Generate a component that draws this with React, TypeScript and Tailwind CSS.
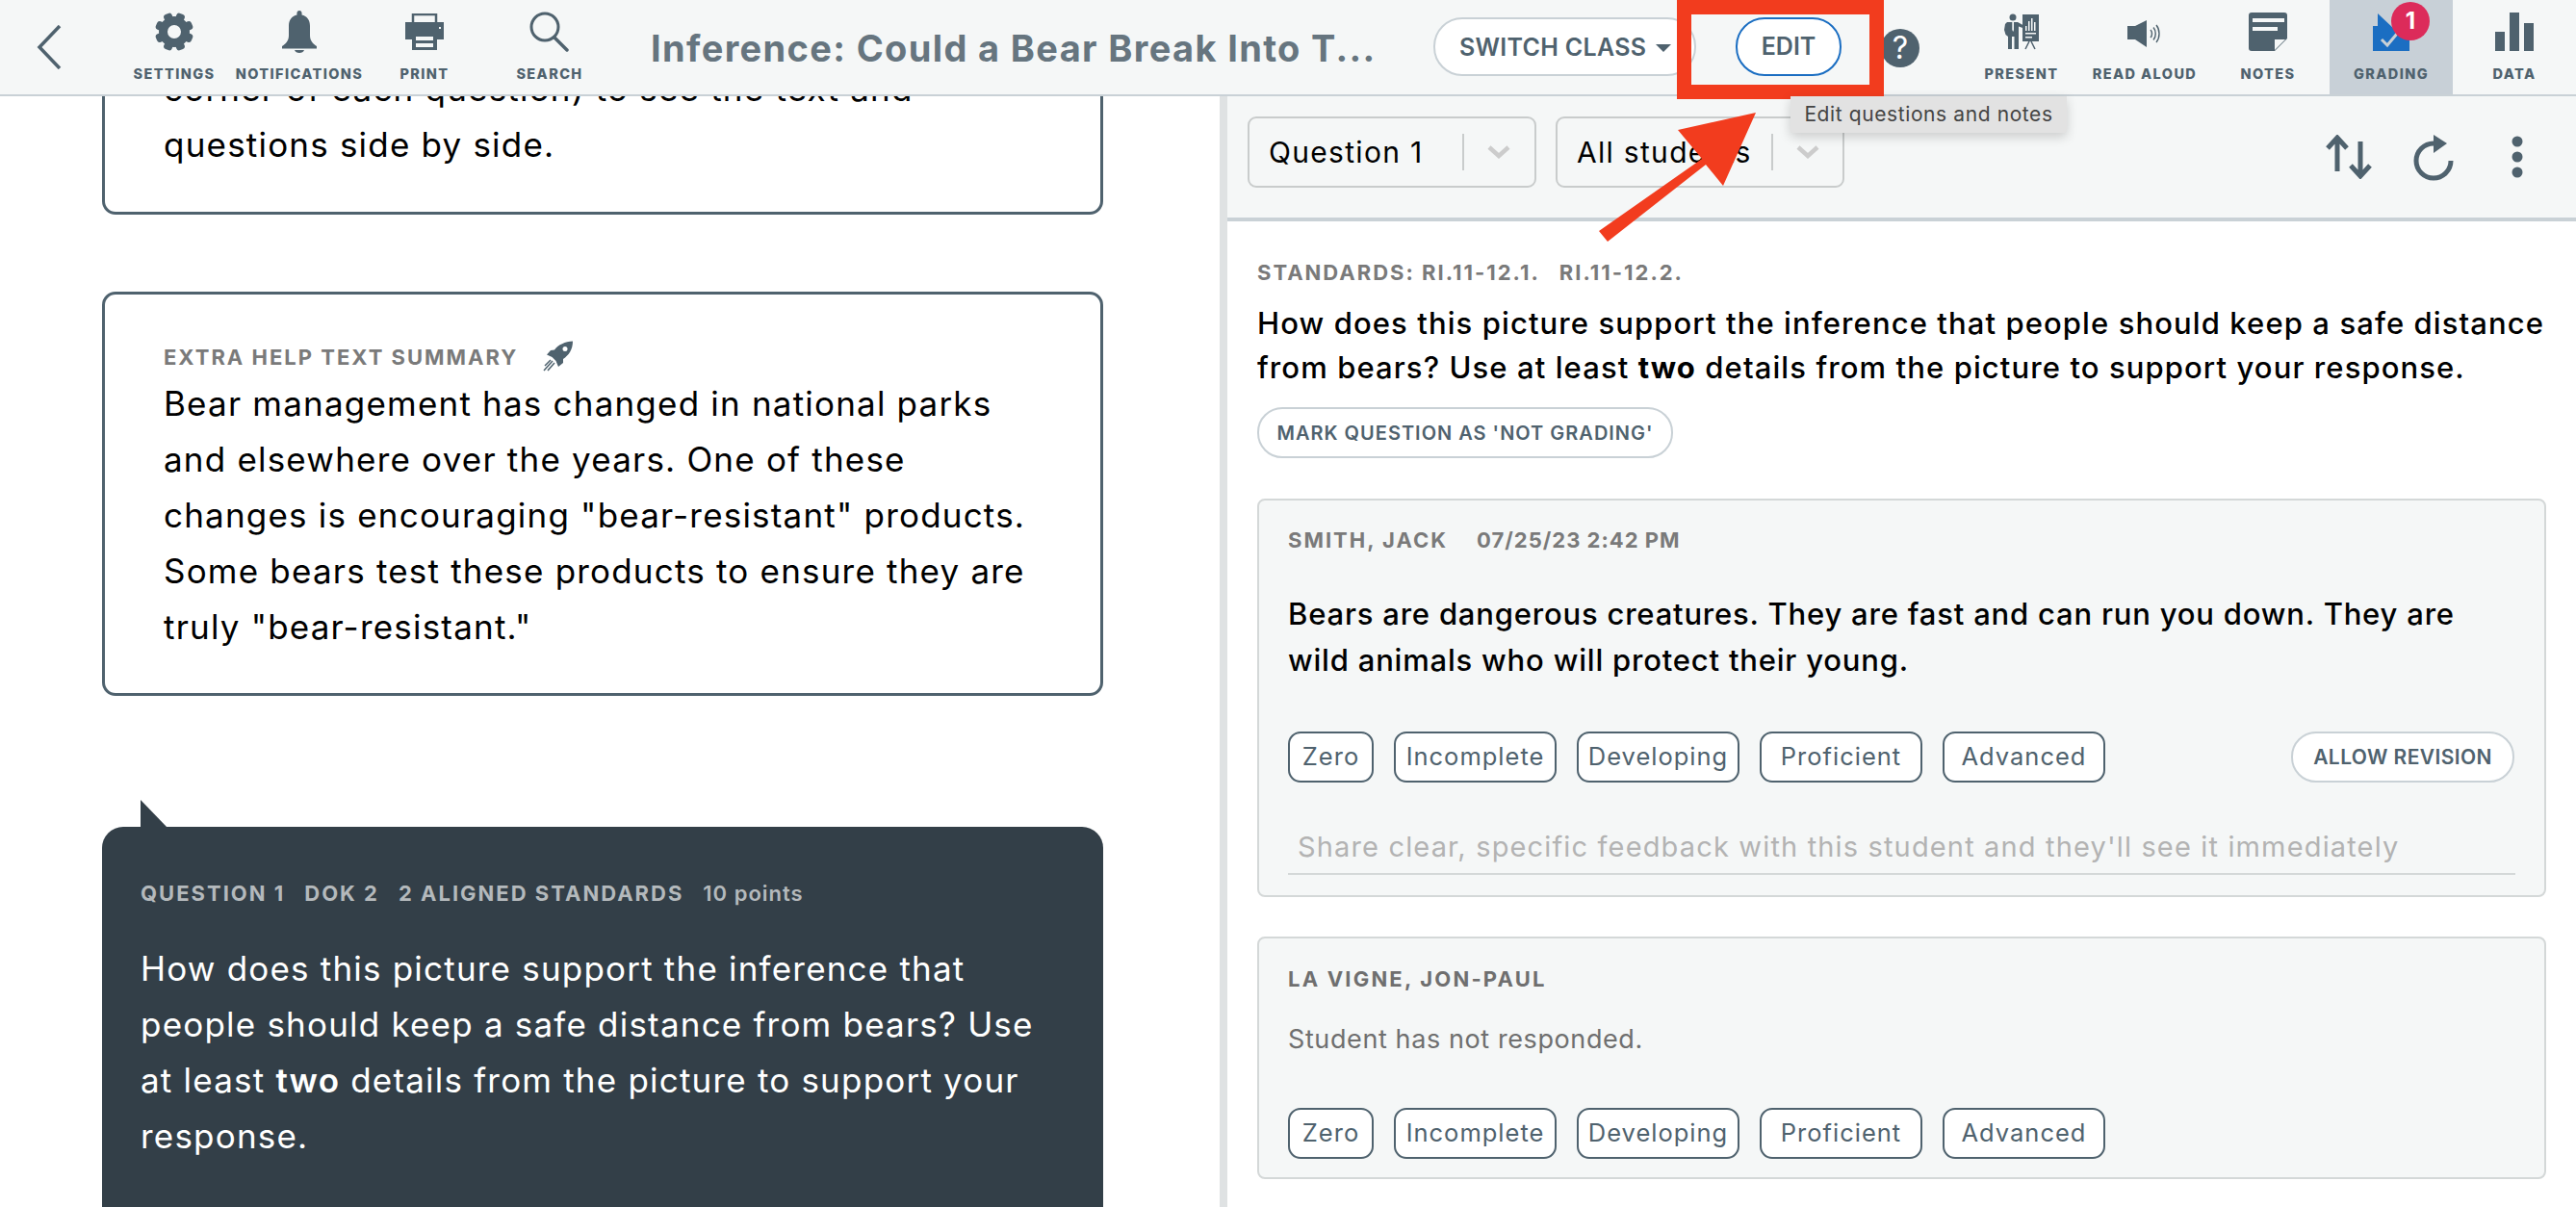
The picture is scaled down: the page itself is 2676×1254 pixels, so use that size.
import type { ReactNode } from "react";

const SLATE = "#4f626e";

function Gear() {
  return (
    <svg width="40" height="40" viewBox="0 0 40 40" fill={SLATE}>
      {[0, 45, 90, 135, 180, 225, 270, 315].map((a) => (
        <rect key={a} x="15.5" y="0" width="9" height="8" rx="3" transform={`rotate(${a + 22.5} 20 20)`} />
      ))}
      <circle cx="20" cy="20" r="11.5" fill="none" stroke={SLATE} strokeWidth="9" />
    </svg>
  );
}

function Bell() {
  return (
    <svg width="36" height="44" viewBox="0 0 36 44" fill={SLATE}>
      <path d="M18 0C16 0 15 2 15.5 4.5C10 5.5 7 10 7 16L7 26C7 32 3 35 0 37L0 39.5L36 39.5L36 37C33 35 29 32 29 26L29 16C29 10 26 5.500 20.500 4.500C21 2 20 0 18 0Z" />
      <path d="M13 41L23 41C22 45 14 45 13 41Z" />
    </svg>
  );
}

function Printer() {
  return (
    <svg width="40" height="38" viewBox="0 0 40 38">
      <rect x="8" y="1" width="24" height="11" fill="none" stroke={SLATE} strokeWidth="2.500" />
      <rect x="0" y="9" width="40" height="18" fill={SLATE} />
      <rect x="7" y="21" width="26" height="17" fill={SLATE} />
      <rect x="11" y="24" width="18" height="11" fill="#f5f7f7" />
      <rect x="11" y="28" width="18" height="3" fill={SLATE} />
      <rect x="35" y="14" width="2" height="2" fill="#f5f7f7" />
    </svg>
  );
}

function Search() {
  return (
    <svg width="42" height="42" viewBox="0 0 42 42" fill="none" stroke={SLATE} strokeWidth="3" strokeLinecap="round">
      <circle cx="16" cy="16" r="14" />
      <path d="M26 27L39 40" strokeWidth="3.500" />
    </svg>
  );
}

function Present() {
  return (
    <svg width="36" height="38" viewBox="0 0 36 38" fill={SLATE}>
      <circle cx="9" cy="4" r="3.500" />
      <path d="M3 9L14 9L23 14L22 16L15 13.500L15 37L10.500 37L10.500 24L8 24L8 37L4 37L4 24L1.500 22L0 17L1 11Z" />
      <path d="M8.300 9L10 9L10 17L9.200 19L8.300 17Z" fill="#f5f7f7" />
      <rect x="19" y="1" width="17" height="28" />
      <path d="M22 13h1.500v5H22zM25 8h1.500v10H25zM28 5h1.500v13H28zM31 9h1.500v9H31z" fill="#f5f7f7" />
      <rect x="22" y="20" width="11" height="1.500" fill="#f5f7f7" />
      <rect x="22" y="24" width="7" height="1.500" fill="#f5f7f7" />
      <path d="M26 29L22 37M28 29L32 37" stroke={SLATE} strokeWidth="1.500" fill="none" />
    </svg>
  );
}

function Speaker() {
  return (
    <svg width="36" height="34" viewBox="0 0 36 34" fill="none" stroke={SLATE} strokeWidth="1.400">
      <path d="M0 11L8 11L20 5L20 33L8 25L0 25Z" fill={SLATE} stroke="none" />
      <path d="M24 15C26 17 26 21 24 23" />
      <path d="M27 12.500C30 16 30 22 27 25.500" />
      <path d="M30 10C34 15 34 23 30 28" />
    </svg>
  );
}

function Notes() {
  return (
    <svg width="40" height="40" viewBox="0 0 40 40">
      <path d="M3 0L37 0C39 0 40 1 40 3L40 27L27 40L3 40C1 40 0 39 0 37L0 3C0 1 1 0 3 0Z" fill={SLATE} />
      <rect x="4" y="6" width="33" height="4" fill="#f5f7f7" />
      <rect x="4" y="15" width="26" height="4" fill="#f5f7f7" />
      <path d="M38 28L27 28L27 39Z" fill="#f5f7f7" />
    </svg>
  );
}

function Grading() {
  return (
    <svg width="38" height="39" viewBox="0 0 38 39">
      <path d="M0 13L5 13L5 0L22 16L38 16L38 39L0 39Z" fill="#1b6ec2" />
      <path d="M9 27L15 33L25 21" fill="none" stroke="#c9d1d6" strokeWidth="3" />
    </svg>
  );
}

function Bars() {
  return (
    <svg width="40" height="40" viewBox="0 0 40 40" fill={SLATE}>
      <rect x="0" y="20" width="10" height="20" />
      <rect x="15" y="0" width="10" height="40" />
      <rect x="30" y="11" width="10" height="29" />
    </svg>
  );
}

function Rocket() {
  return (
    <svg width="36" height="36" viewBox="0 0 36 36" fill={SLATE}>
      <path d="M33 1.500C33 10 29 16 23 20L23 24L18 28L15.500 22L11.500 18L6 15.500L10 11L14 10.500C18 5 25 2 33 1.500Z" />
      <path d="M12 22L3 32M14 24L7 32M10 21L4 27" stroke={SLATE} strokeWidth="1.500" fill="none" />
      <circle cx="25" cy="9.500" r="2.500" fill="#ffffff" />
    </svg>
  );
}

function Swap() {
  return (
    <svg width="50" height="46" viewBox="0 0 50 46" fill="none" stroke={SLATE} strokeWidth="5">
      <path d="M13 38L13 3M3 14L13 3L23 14" />
      <path d="M37 7L37 43M27 32L37 43L47 32" />
    </svg>
  );
}

function Refresh() {
  return (
    <svg width="46" height="54" viewBox="0 0 46 54" fill="none">
      <path d="M23 13A18 18 0 1 0 41 31" stroke={SLATE} strokeWidth="5" />
      <path d="M37 13L23 4L23 23Z" fill={SLATE} />
    </svg>
  );
}

function Chevron() {
  return (
    <svg width="24" height="14" viewBox="0 0 24 14" fill="none" stroke="#cccccc" strokeWidth="4.500">
      <path d="M2 2L12 11L22 2" />
    </svg>
  );
}

function ToolItem({ icon, label, active, w }: { icon: ReactNode; label: string; active?: boolean; w: string }) {
  return (
    <div className={`relative flex h-[98px] ${w} shrink-0 flex-col items-center ${active ? "bg-[#c8d0d7]" : ""}`}>
      <div className="flex h-[66px] items-center justify-center">{icon}</div>
      <span className="text-[14.5px] leading-[22px] font-extrabold tracking-[1.4px] whitespace-nowrap text-[#4f626e]">{label}</span>
    </div>
  );
}

function Select({ label, w, dividerMl }: { label: string; w: string; dividerMl: string }) {
  return (
    <div className={`flex h-[74px] ${w} items-center rounded-[9px] border-2 border-[#c9cccc] pl-[20px]`}>
      <span className="text-[30px] tracking-[1.3px] whitespace-nowrap text-black">{label}</span>
      <span className={`h-[38px] w-[2px] bg-[#c9cccc] ${dividerMl}`} />
      <span className="ml-[24px]">
        <Chevron />
      </span>
    </div>
  );
}

const CHIPS = [
  { label: "Zero", w: "w-[89px]" },
  { label: "Incomplete", w: "w-[169px]" },
  { label: "Developing", w: "w-[169px]" },
  { label: "Proficient", w: "w-[169px]" },
  { label: "Advanced", w: "w-[169px]" },
];

function Chips() {
  return (
    <div className="flex gap-[21px]">
      {CHIPS.map((c) => (
        <div
          key={c.label}
          className={`flex h-[53px] ${c.w} items-center justify-center rounded-[13px] border-2 border-[#4f626e] bg-white text-[25.5px] tracking-[1px] text-[#4f626e]`}
        >
          {c.label}
        </div>
      ))}
    </div>
  );
}

export default function App() {
  return (
    <div className="relative flex h-[1254px] w-[2676px] flex-col overflow-hidden bg-white font-['Inter',sans-serif]">
      {/* top bar */}
      <header className="z-10 flex h-[100px] shrink-0 items-start border-b-2 border-[#c9d1d6] bg-[#f5f7f7]">
        <div className="flex h-[98px] w-[116px] shrink-0 items-center pl-[38px]">
          <svg width="26" height="46" viewBox="0 0 26 46" fill="none" stroke={SLATE} strokeWidth="3.500">
            <path d="M24 1L3 23L24 45" />
          </svg>
        </div>
        <ToolItem w="w-[130px]" icon={<Gear />} label="SETTINGS" />
        <ToolItem w="w-[130px]" icon={<Bell />} label="NOTIFICATIONS" />
        <ToolItem w="w-[130px]" icon={<Printer />} label="PRINT" />
        <ToolItem w="w-[130px]" icon={<Search />} label="SEARCH" />
        <h1 className="ml-[40px] w-[813px] shrink-0 pt-[26px] text-[38px] leading-[48px] font-bold tracking-[1.35px] whitespace-nowrap text-[#66757f]">
          Inference: Could a Bear Break Into T...
        </h1>
        <div className="mt-[18px] flex h-[61px] w-[273px] shrink-0 items-center rounded-[30px] border-2 border-[#c9d1d6] bg-white pt-[2px] pl-[25px] text-[25px] font-semibold tracking-[0.3px] whitespace-nowrap text-[#4f626e]">
          SWITCH CLASS
          <span className="ml-[10px] h-0 w-0 border-x-[8px] border-t-[8px] border-x-transparent border-t-[#4f626e]" />
        </div>
        <div className="mt-[18px] ml-[41px] flex h-[61px] w-[110px] shrink-0 items-center justify-center rounded-[30px] border-2 border-[#1b6ec2] bg-white text-[25px] font-semibold text-[#4f626e]">
          EDIT
        </div>
        <div className="mt-[30px] ml-[41px] flex h-[40px] w-[40px] shrink-0 items-center justify-center rounded-full bg-[#4f626e] text-[32px] leading-none text-white">
          ?
        </div>
        <div className="ml-auto flex">
          <ToolItem w="w-[128px]" icon={<Present />} label="PRESENT" />
          <ToolItem w="w-[128px]" icon={<Speaker />} label="READ ALOUD" />
          <ToolItem w="w-[128px]" icon={<Notes />} label="NOTES" />
          <div className="relative">
            <ToolItem w="w-[128px]" active icon={<Grading />} label="GRADING" />
            <span className="absolute top-[2px] left-[64px] flex h-[40px] w-[40px] items-center justify-center rounded-full bg-[#dc2b5a] text-[24px] font-bold text-white">
              1
            </span>
          </div>
          <ToolItem w="w-[128px]" icon={<Bars />} label="DATA" />
        </div>
      </header>

      <div className="flex min-h-0 flex-1">
        {/* passage column */}
        <main className="w-[1267px] shrink-0 overflow-hidden pr-[121px] pl-[106px] text-[35px] leading-[58px] tracking-[1.2px] whitespace-nowrap text-black">
          <section className="-mt-[60px] rounded-[14px] border-[3px] border-[#4f626e] pt-[20px] pr-[40px] pb-[41px] pl-[61px]">
            <p>corner of each question) to see the text and</p>
            <p>questions side by side.</p>
          </section>
          <section className="mt-[80px] rounded-[14px] border-[3px] border-[#4f626e] pt-[45px] pr-[30px] pb-[40px] pl-[61px]">
            <div className="flex h-[39px] items-center gap-[24px] text-[22px] leading-none font-bold tracking-[2px] text-[#7a7a7a]">
              EXTRA HELP TEXT SUMMARY
              <Rocket />
            </div>
            <p>Bear management has changed in national parks</p>
            <p>and elsewhere over the years. One of these</p>
            <p>changes is encouraging "bear-resistant" products.</p>
            <p>Some bears test these products to ensure they are</p>
            <p>truly "bear-resistant."</p>
          </section>
          <section className="relative mt-[136px] rounded-t-[22px] bg-[#333f48] pt-[56px] pr-[30px] pb-[120px] pl-[40px] text-white">
            <svg className="absolute -top-[28px] left-[40px]" width="28" height="29" viewBox="0 0 28 29" fill="#333f48">
              <path d="M0 0L28 29L0 29Z" />
            </svg>
            <div className="flex h-[26px] items-center gap-[20px] text-[22px] leading-none font-bold tracking-[2px] whitespace-nowrap text-[#b4b9bc]">
              <span>QUESTION 1</span>
              <span>DOK 2</span>
              <span>2 ALIGNED STANDARDS</span>
              <span className="font-semibold tracking-[1px]">10 points</span>
            </div>
            <div className="mt-[36px]">
              <p>How does this picture support the inference that</p>
              <p>people should keep a safe distance from bears? Use</p>
              <p>
                at least <b className="font-semibold">two</b> details from the picture to support your
              </p>
              <p>response.</p>
            </div>
          </section>
        </main>

        {/* grading column */}
        <aside className="flex-1 border-l-[8px] border-[#dfe2e3]">
          <div className="flex h-[130px] items-center gap-[20px] border-b-4 border-[#c9d1d6] bg-[#f5f7f7] pr-[54px] pb-[10px] pl-[21px]">
            <Select label="Question 1" w="w-[300px]" dividerMl="ml-[41px]" />
            <Select label="All students" w="w-[300px]" dividerMl="ml-[20px]" />
            <div className="mt-[10px] ml-auto flex items-center gap-[40px]">
              <Swap />
              <Refresh />
              <svg className="ml-[17px]" width="14" height="44" viewBox="0 0 14 44" fill={SLATE}>
                <circle cx="7" cy="6" r="5.500" />
                <circle cx="7" cy="22" r="5.500" />
                <circle cx="7" cy="38" r="5.500" />
              </svg>
            </div>
          </div>

          <div className="pt-[40px] pr-[31px] pl-[31px]">
            <div className="flex h-[26px] gap-[20px] text-[22px] leading-[26px] font-bold tracking-[2px] text-[#7a7a7a]">
              <span>STANDARDS: RI.11-12.1.</span>
              <span>RI.11-12.2.</span>
            </div>
            <p className="mt-[17px] text-[31px] leading-[46px] font-medium tracking-[1.1px] whitespace-nowrap text-black">
              How does this picture support the inference that people should keep a safe distance
              <br />
              from bears? Use at least <b className="font-bold">two</b> details from the picture to support your response.
            </p>
            <div className="mt-[18px] flex h-[53px] w-[432px] items-center justify-center rounded-[26px] border-2 border-[#c9d1d6] bg-white text-[20px] font-semibold tracking-[1px] whitespace-nowrap text-[#4f626e]">
              MARK QUESTION AS 'NOT GRADING'
            </div>

            <section className="mt-[42px] h-[414px] rounded-[8px] border-2 border-[#d4d8d8] bg-[#f5f7f7] pt-[27px] pr-[30px] pl-[30px]">
              <div className="flex h-[28px] items-center gap-[30px] text-[22px] font-bold text-[#7a7a7a]">
                <span className="tracking-[2px]">SMITH, JACK</span>
                <span className="tracking-[1px]">07/25/23 2:42 PM</span>
              </div>
              <p className="mt-[39px] text-[31px] leading-[48px] font-medium tracking-[0.8px] whitespace-nowrap text-black">
                Bears are dangerous creatures. They are fast and can run you down. They are
                <br />
                wild animals who will protect their young.
              </p>
              <div className="mt-[50px] flex items-center justify-between pr-[1px]">
                <Chips />
                <div className="flex h-[53px] w-[232px] items-center justify-center rounded-[26px] border-2 border-[#c9d1d6] bg-white text-[21px] font-semibold tracking-[0.4px] whitespace-nowrap text-[#4f626e]">
                  ALLOW REVISION
                </div>
              </div>
              <div className="mt-[45px] border-b-2 border-[#d4d8d8] pb-[5px] pl-[10px] text-[29px] leading-[44px] tracking-[1.15px] whitespace-nowrap text-[#b3b3b3]">
                Share clear, specific feedback with this student and they'll see it immediately
              </div>
            </section>

            <section className="mt-[41px] h-[252px] rounded-[8px] border-2 border-[#d4d8d8] bg-[#f5f7f7] pt-[28px] pl-[30px]">
              <div className="h-[28px] text-[22px] leading-[28px] font-bold tracking-[2.2px] text-[#6f6f6f]">LA VIGNE, JON-PAUL</div>
              <p className="mt-[29px] text-[27px] leading-[40px] tracking-[0.6px] text-[#6f6f6f]">Student has not responded.</p>
              <div className="mt-[51px]">
                <Chips />
              </div>
            </section>
          </div>
        </aside>
      </div>

      {/* screenshot annotation */}
      <div className="absolute top-0 left-[1742px] z-20 h-[103px] w-[215px] border-[15px] border-[#f23c1e]" />
      <div className="absolute top-[100px] left-[1860px] z-20 flex h-[38px] w-[287px] items-center justify-center rounded-b-[3px] bg-[#e2e2e2] text-[21px] tracking-[0.6px] text-[#444444] shadow-[0_4px_12px_rgba(0,0,0,0.18)]">
        Edit questions and notes
      </div>
      <svg className="absolute top-[110px] left-[1655px] z-30" width="175" height="145" viewBox="1655 110 175 145" fill="#f23c1e">
        <path d="M1824 117L1743 135L1768 165L1661 240L1670 251L1772 171L1790 193Z" />
      </svg>
    </div>
  );
}
